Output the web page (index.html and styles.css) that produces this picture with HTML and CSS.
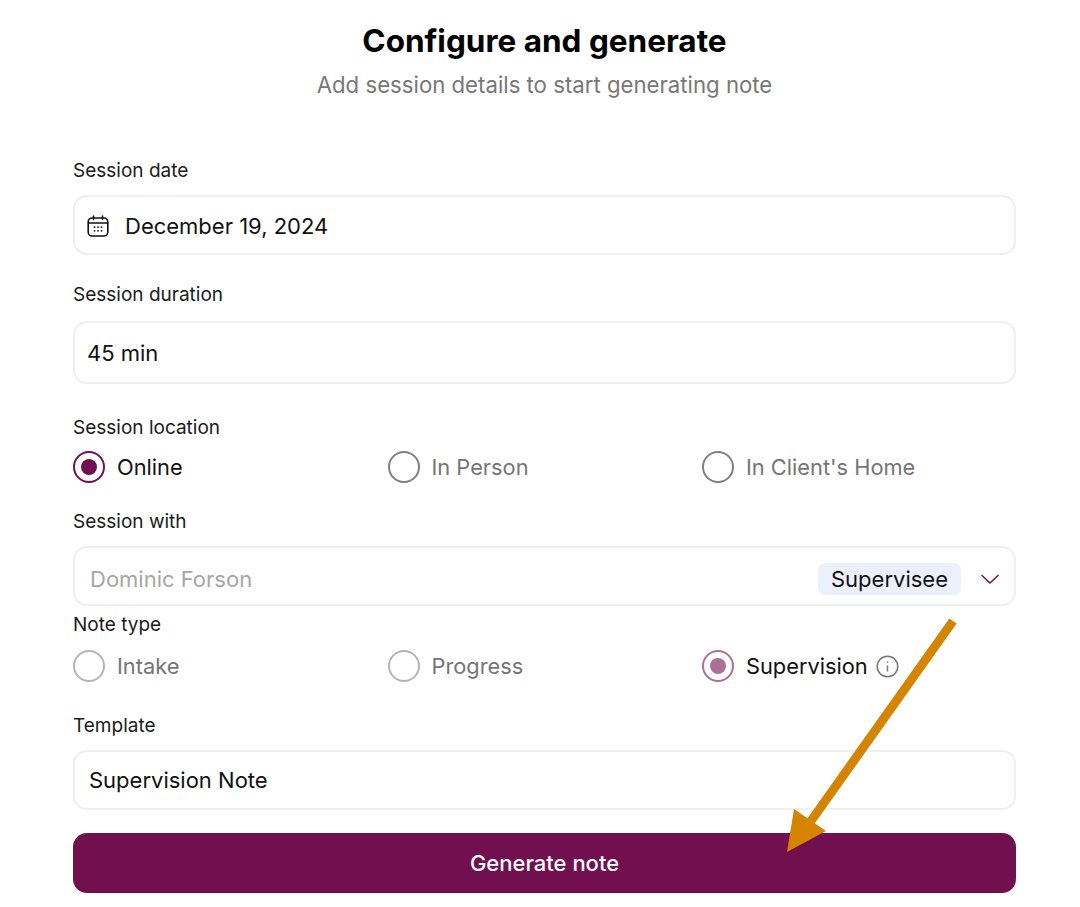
FILE: index.html
```html
<!DOCTYPE html>
<html lang="en">
<head>
<meta charset="UTF-8">
<meta name="viewport" content="width=device-width, initial-scale=1.0">
<title>Configure and generate</title>
<link rel="stylesheet" href="styles.css">
</head>
<body>

<div class="page">
  <h1 class="title">Configure and generate</h1>
  <p class="subtitle">Add session details to start generating note</p>

  <form class="form">
    <div class="label label-date">Session date</div>
    <div class="field field-date">
      <svg class="cal-icon" width="22" height="22" viewBox="0 0 22 22" fill="none" stroke="#111" stroke-width="1.6" stroke-linecap="round">
        <rect x="1.2" y="3" width="19.6" height="18" rx="4"/>
        <path d="M1.5 8h19M6.5 1v3.5M15.5 1v3.5"/>
        <path d="M7.5 12.2h.01M11 12.2h.01M14.5 12.2h.01M7.5 15.8h.01M11 15.8h.01M14.5 15.8h.01" stroke-width="1.8"/>
      </svg>
      <span>December 19, 2024</span>
    </div>

    <div class="label label-duration">Session duration</div>
    <div class="field field-duration">45 min</div>

    <div class="label label-location">Session location</div>
    <div class="radio-row row-location">
      <div class="radio-item"><span class="radio checked"></span><span>Online</span></div>
      <div class="radio-item muted"><span class="radio"></span><span>In Person</span></div>
      <div class="radio-item muted"><span class="radio"></span><span>In Client's Home</span></div>
    </div>

    <div class="label label-with">Session with</div>
    <div class="field field-with">
      <span class="placeholder">Dominic Forson</span>
      <span class="tag">Supervisee</span>
      <svg class="chevron" width="20" height="12" viewBox="0 0 20 12" fill="none" stroke="#72104f" stroke-width="1.4">
        <path d="M1.5 2l8.5 8 8.5-8"/>
      </svg>
    </div>

    <div class="label label-type">Note type</div>
    <div class="radio-row row-type">
      <div class="radio-item muted faded"><span class="radio"></span><span>Intake</span></div>
      <div class="radio-item muted faded"><span class="radio"></span><span>Progress</span></div>
      <div class="radio-item"><span class="radio checked soft"></span><span>Supervision</span>
        <svg class="info-icon" width="23" height="23" viewBox="0 0 23 23" fill="none" stroke="#777" stroke-width="1.5">
          <circle cx="11.5" cy="11.5" r="10.3"/>
          <path d="M11.5 10.5v6" stroke-width="1.5"/>
          <path d="M11.5 6.4v1.4" stroke-width="1.5"/>
        </svg>
      </div>
    </div>

    <div class="label label-template">Template</div>
    <div class="field field-template">Supervision Note</div>

    <button type="button" class="generate">Generate note</button>
  </form>
</div>

<svg class="arrow" width="1080" height="907" viewBox="0 0 1080 907" fill="none">
  <path d="M953 621L811 821" stroke="#d58400" stroke-width="9"/>
  <path d="M794 809L787 852L826 831Z" fill="#d58400"/>
</svg>

</body>
</html>
```

FILE: styles.css
```css
* { box-sizing: border-box; }
body { margin: 0; background: #fff; color: #111; font-family: Inter, "Liberation Sans", sans-serif; position: relative; height: 907px; overflow: hidden; }
.page { padding: 0 64px 0 73px; }

.title { margin: 0; padding-top: 22px; font-size: 31.5px; line-height: 38px; font-weight: 700; text-align: center; color: #000; }
.subtitle { margin: 8px 0 0; font-size: 22.2px; line-height: 34px; color: #777; text-align: center; }

.form { display: flex; flex-direction: column; }
.label { font-size: 19px; line-height: 24px; color: #1a1a1a; }
.label-date { margin-top: 57px; }
.label-duration { margin-top: 28px; }
.label-location { margin-top: 32px; }
.label-with { margin-top: 27px; }
.label-type { margin-top: 7px; }
.label-template { margin-top: 32px; }

.field { display: flex; align-items: center; border: 2px solid #efefef; border-radius: 14px; font-size: 22px; color: #111; }
.field-date { height: 60px; margin-top: 12px; padding: 1px 0 0 12px; }
.cal-icon { margin-right: 16px; }
.field-duration { height: 63px; margin-top: 14px; padding-left: 12px; }
.field-with { height: 60px; margin-top: 12px; padding: 6px 14px 0 15px; }
.field-template { height: 60px; margin-top: 12px; padding-left: 14px; }

.placeholder { color: #a6a6a6; flex: 1; }
.tag { background: #ecf0fc; border-radius: 7px; height: 32px; line-height: 32px; padding: 0 13px; color: #111; }
.chevron { margin-left: 19px; }

.radio-row { display: grid; grid-template-columns: 314.5px 314.5px 1fr; }
.row-location { margin-top: 11px; height: 32px; }
.row-type { margin-top: 13px; height: 32px; }
.radio-item { display: flex; align-items: center; font-size: 21.8px; color: #111; }
.radio-item.muted { color: #757575; }
.radio { width: 32px; height: 32px; border: 2.5px solid #808080; border-radius: 50%; margin-right: 12px; display: flex; align-items: center; justify-content: center; flex-shrink: 0; }
.radio.checked { border-color: #72104f; }
.radio.checked::after { content: ""; width: 16px; height: 16px; border-radius: 50%; background: #72104f; }
.radio.soft { border-color: #ad6f9a; }
.radio.soft::after { background: #ad6f9a; }
.faded .radio { border-color: #b5b5b5; }
.info-icon { margin-left: 8px; }

.generate { height: 60px; margin-top: 23px; border: none; border-radius: 14px; background: #72104f; color: #fff; font-family: inherit; font-size: 22px; font-weight: 500; }

.arrow { position: absolute; left: 0; top: 0; pointer-events: none; }
```
